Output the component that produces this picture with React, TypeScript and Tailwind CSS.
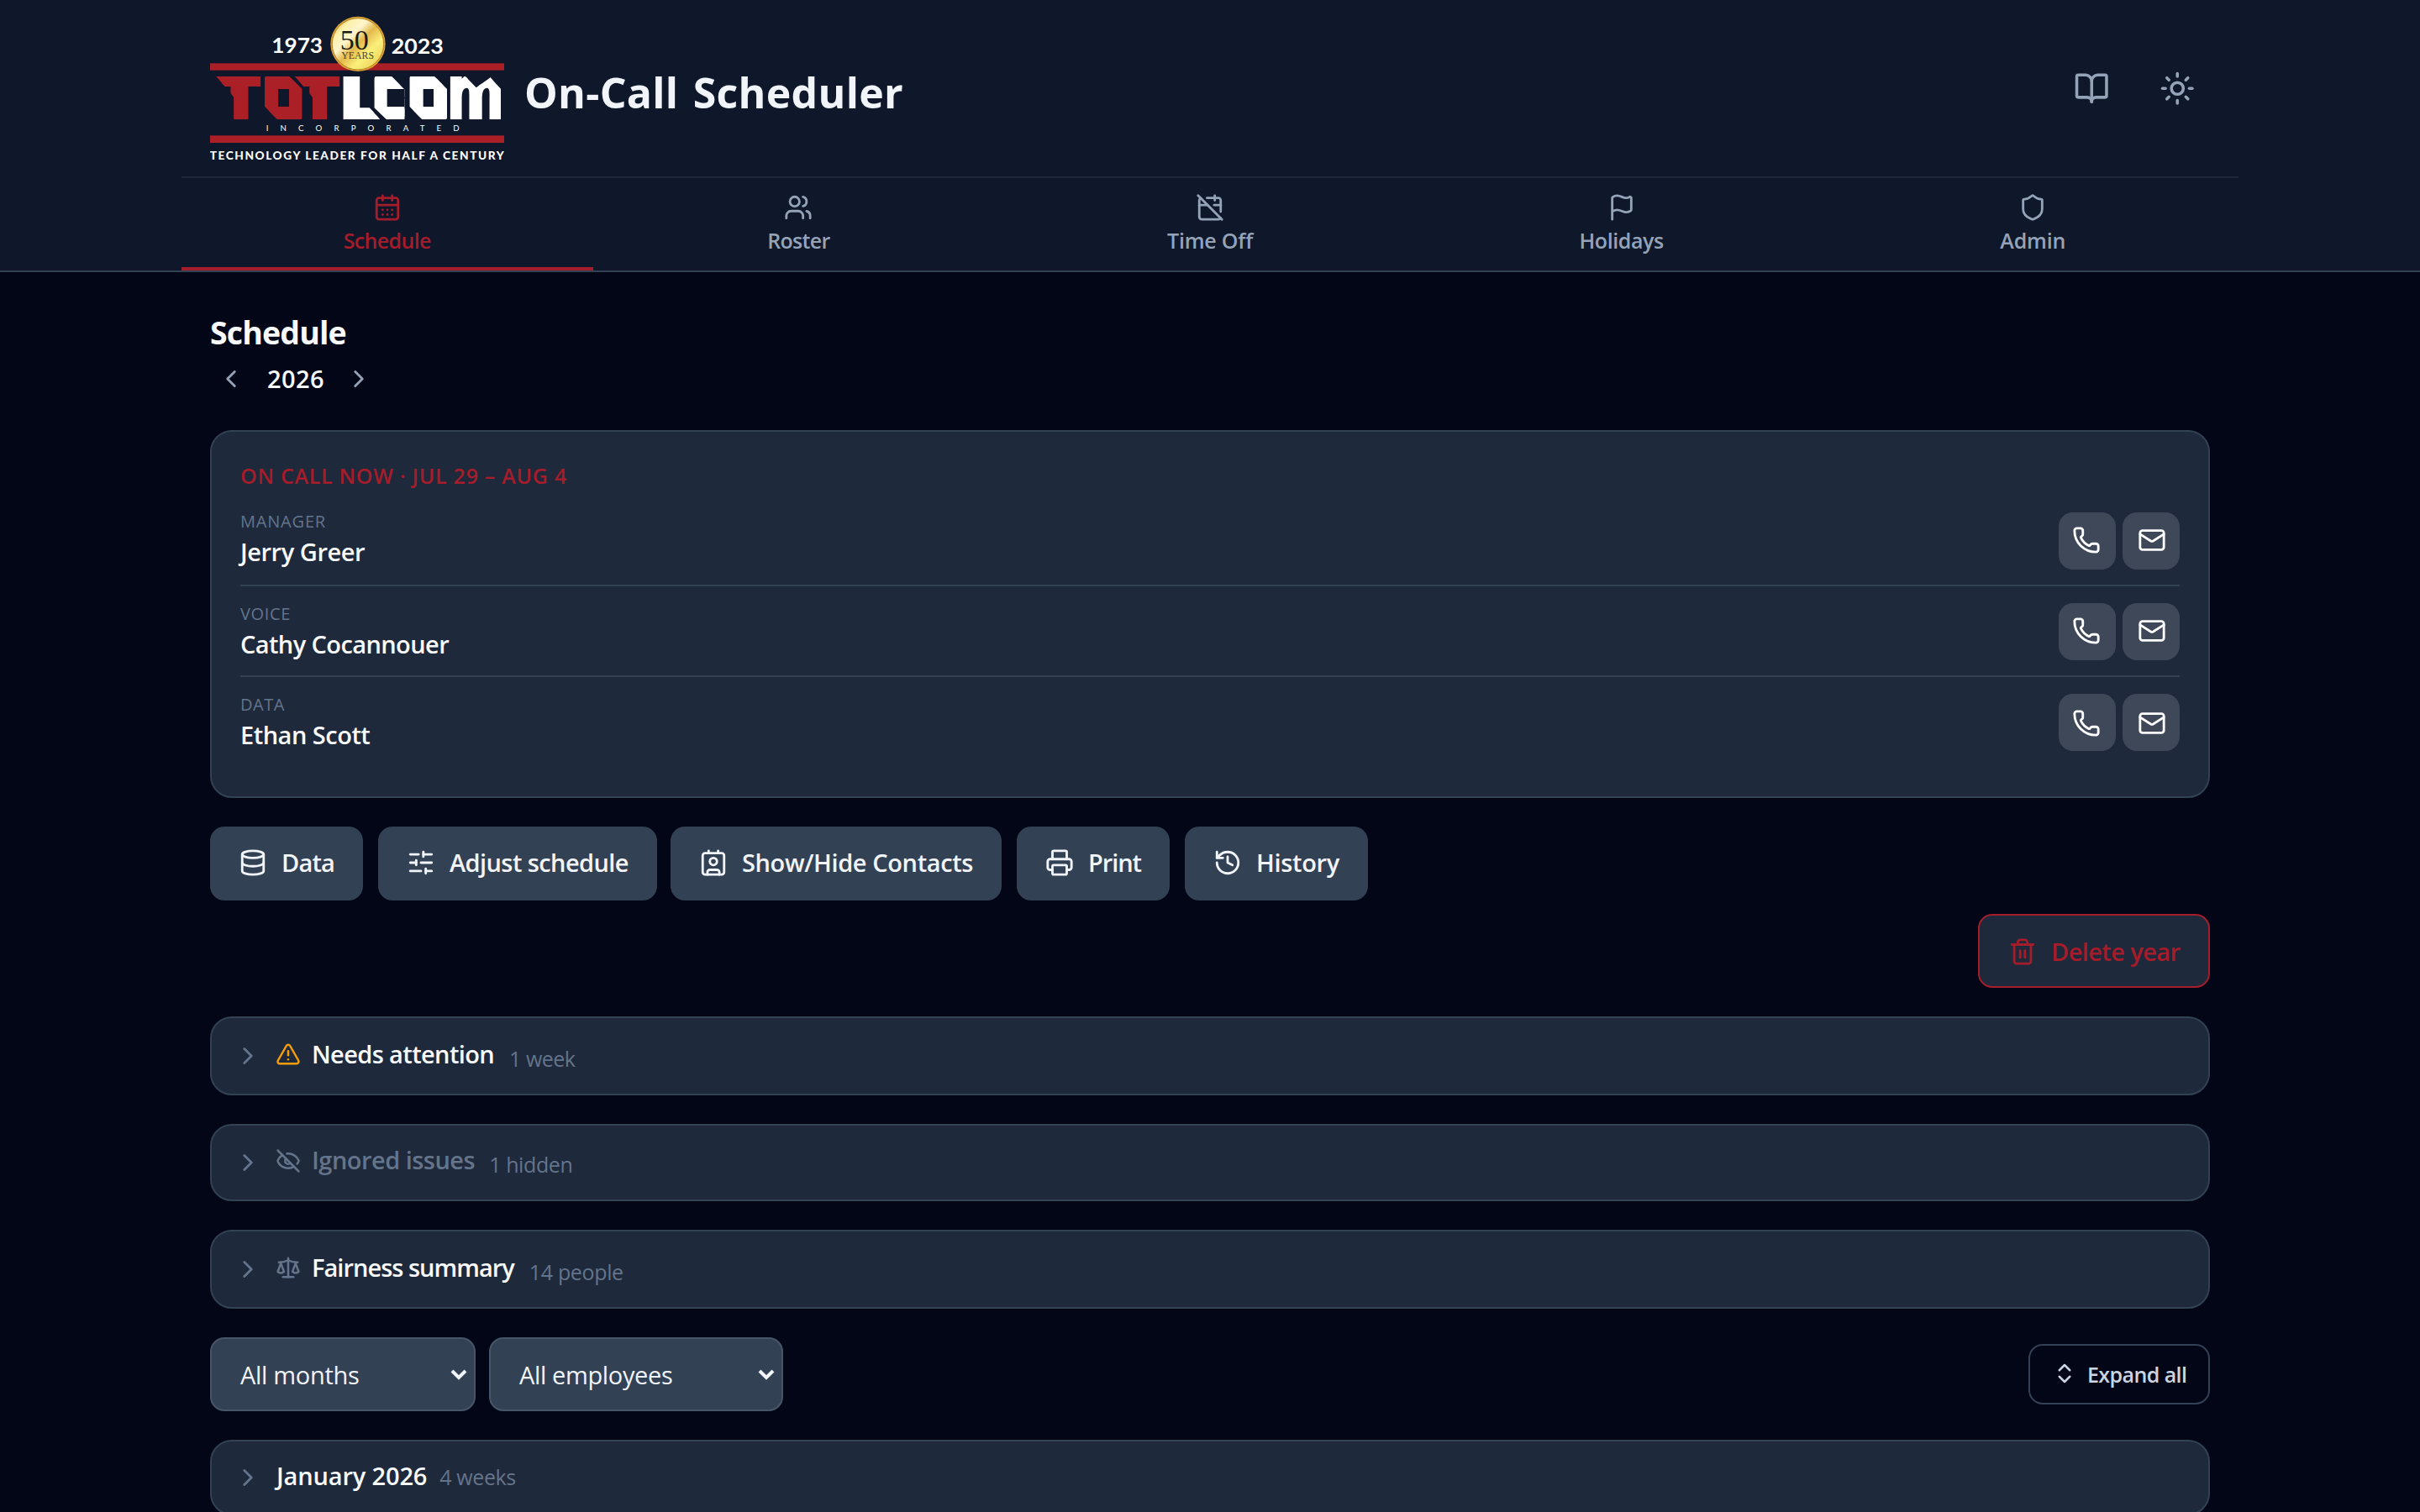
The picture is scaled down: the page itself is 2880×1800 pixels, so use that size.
import React from "react";
import {
  BookOpen,
  CalendarDays,
  CalendarOff,
  ChevronLeft,
  ChevronRight,
  ChevronsUpDown,
  Contact,
  Database,
  EyeOff,
  Flag,
  History,
  Mail,
  Phone,
  Printer,
  Scale,
  Shield,
  SlidersHorizontal,
  Sun,
  Trash2,
  TriangleAlert,
  Users,
  type LucideIcon,
} from "lucide-react";

type Letter = {
  ch: string;
  x: number;
  w: number;
  fill: string;
  clip: string;
  size?: number;
  stroke?: number;
  hole?: [number, number];
};

const RED = "#ab1f27";
const NAVY = "#0f172a";

/* Wordmark letters: each one is set in its own box, trimmed by a chamfered frame,
   and the round ones get a square counter. */
const LETTERS: Letter[] = [
  { ch: "T", x: 142, w: 166, fill: RED, clip: "142,273 301,273 301,427 205,427 205,347" },
  { ch: "O", x: 315, w: 134, fill: RED, clip: "315,273 403,273 449,318 449,427 360,427 315,380", stroke: 60, hole: [363, 39] },
  { ch: "T", x: 423, w: 166, fill: RED, clip: "423,273 583,273 583,427 486,427 486,347" },
  { ch: "L", x: 582, w: 142, fill: "#fff", clip: "595,273 686,273 686,381 727,427 595,427", stroke: 18 },
  { ch: "C", x: 706, w: 120, fill: "#fff", clip: "706,273 768,273 815,320 815,427 750,427 706,385", stroke: 60, hole: [752, 64] },
  { ch: "O", x: 832, w: 134, fill: "#fff", clip: "832,273 921,273 966,318 966,427 877,427 832,380", stroke: 60, hole: [881, 37] },
  { ch: "m", x: 965, w: 206, fill: "#fff", clip: "977,273 1032,273 1070,313 1121,277 1158,318 1158,427 977,427", size: 268 },
];

function Logo() {
  return (
    <svg viewBox="120 54 1050 522" className="mt-[18px] h-[174px] w-[350px] shrink-0">
      <defs>
        <linearGradient id="gold" x1="0" y1="0" x2="1" y2="1">
          <stop offset="0" stopColor="#d9a02c" />
          <stop offset="0.2" stopColor="#fbf0a8" />
          <stop offset="0.36" stopColor="#fff6cf" />
          <stop offset="0.5" stopColor="#e3b94a" />
          <stop offset="0.68" stopColor="#fbf07c" />
          <stop offset="0.85" stopColor="#f0d860" />
          <stop offset="1" stopColor="#c98b1c" />
        </linearGradient>
        {LETTERS.map((l, i) => (
          <clipPath key={i} id={`frame-${i}`}>
            <polygon points={l.clip} />
          </clipPath>
        ))}
      </defs>
      <rect x="120" y="226" width="1050" height="25" fill={RED} />
      <rect x="120" y="484" width="1050" height="26" fill={RED} />
      <circle cx="648" cy="157" r="98" fill="#dca436" />
      <circle cx="648" cy="157" r="92" fill="url(#gold)" stroke="#a8741c" strokeWidth="2.5" />
      <g fontFamily="Liberation Serif, serif" fill="#1c1a10">
        <text x="584" y="178" fontSize="104" textLength="102" lengthAdjust="spacingAndGlyphs">50</text>
        <text x="589" y="210" fontSize="39" textLength="116" lengthAdjust="spacingAndGlyphs" fill="#4d4420">YEARS</text>
      </g>
      <g fontFamily="Lato, sans-serif" fontWeight="700" fill="#fff">
        <text x="340" y="188" fontSize="76" textLength="182" lengthAdjust="spacingAndGlyphs">1973</text>
        <text x="767" y="191" fontSize="76" textLength="186" lengthAdjust="spacingAndGlyphs">2023</text>
        <text x="320" y="467" fontSize="29" textLength="690" fontWeight="400">INCORPORATED</text>
        <text x="119" y="570" fontSize="41" fontWeight="900" textLength="1050" lengthAdjust="spacing">
          TECHNOLOGY LEADER FOR HALF A CENTURY
        </text>
      </g>
      {LETTERS.map((l, i) => (
        <g key={i} clipPath={`url(#frame-${i})`}>
          <text
            x={l.x - 4}
            y="424"
            fontSize={l.size ?? 203}
            fontFamily="DejaVu Sans, sans-serif"
            fontWeight="700"
            textLength={l.w + 8}
            lengthAdjust="spacingAndGlyphs"
            fill={l.fill}
            stroke={l.fill}
            strokeWidth={l.stroke ?? 12}
          >
            {l.ch}
          </text>
          {l.hole && <rect x={l.hole[0]} y="318" width={l.hole[1]} height="63" fill={NAVY} />}
        </g>
      ))}
    </svg>
  );
}

const TABS: { label: string; icon: LucideIcon; text: string; active?: boolean }[] = [
  { label: "Schedule", icon: CalendarDays, text: "tracking-[-0.65px]", active: true },
  { label: "Roster", icon: Users, text: "tracking-[-0.7px]" },
  { label: "Time Off", icon: CalendarOff, text: "tracking-[-0.2px]" },
  { label: "Holidays", icon: Flag, text: "tracking-[-0.4px]" },
  { label: "Admin", icon: Shield, text: "tracking-[-0.2px]" },
];

function Header() {
  return (
    <header className="border-b-2 border-[#334155] bg-[#0f172a]">
      <div className="mx-auto w-[2448px]">
        <div className="flex h-[210px] items-start px-[34px]">
          <Logo />
          <h1 className="ml-[24px] mt-[75px] whitespace-nowrap text-[50px] font-bold leading-[70px] tracking-[0.3px] text-[#f1f5f9] [word-spacing:4px]">
            On-Call Scheduler
          </h1>
          <div className="ml-auto mt-[67px] flex gap-[25px] text-[#94a3b8]">
            <button className="flex h-[77px] w-[77px] items-center justify-center rounded-2xl">
              <BookOpen size={42.5} />
            </button>
            <button className="flex h-[77px] w-[77px] items-center justify-center rounded-2xl">
              <Sun size={42.5} />
            </button>
          </div>
        </div>
        <nav className="grid grid-cols-5 border-t-2 border-[#1e293b]">
          {TABS.map(({ label, icon: Icon, text, active }) => (
            <a
              key={label}
              className={`flex h-[110px] flex-col items-center border-b-4 pt-[18px] ${
                active ? "border-[#a51c2a] text-[#a51c2a]" : "border-transparent text-[#94a3b8]"
              }`}
            >
              <Icon size={34} />
              <span className={`mt-[5px] text-[25px] font-semibold leading-[34px] ${text}`}>{label}</span>
            </a>
          ))}
        </nav>
      </div>
    </header>
  );
}

const ON_CALL = [
  { role: "MANAGER", name: "Jerry Greer", row: "h-[108px] border-b-2 pt-[16px]", actions: "mt-[4px]", roleText: "tracking-[0.81px]", nameText: "tracking-[-0.45px]", icon: "mb-[2px]" },
  { role: "VOICE", name: "Cathy Cocannouer", row: "h-[108px] border-b-2 pt-[18px]", actions: "mt-[2px]", roleText: "tracking-[0.64px]", nameText: "tracking-[-0.6px]", icon: "mb-[2px]" },
  { role: "DATA", name: "Ethan Scott", row: "h-[108px] pt-[18px]", actions: "mt-[2px]", roleText: "tracking-[0.54px]", nameText: "tracking-[-0.5px]", icon: "mt-[2px]" },
];

function OnCallCard() {
  return (
    <section className="mt-[30px] h-[438px] rounded-[26px] border-2 border-[#334155] bg-[#1e293b] px-[34px] pt-[34px]">
      <h3 className="mb-[6px] text-[25px] font-semibold leading-[36px] tracking-[0.72px] text-[#a51c2a]">
        ON CALL NOW · JUL 29 – AUG 4
      </h3>
      {ON_CALL.map((p) => (
        <div key={p.role} className={`flex justify-between border-[#334155] ${p.row}`}>
          <div>
            <div className={`text-[20px] font-medium leading-[30px] text-[#64748b] ${p.roleText}`}>{p.role}</div>
            <div className={`mt-[3px] text-[29px] font-semibold leading-[36px] text-[#f8fafc] ${p.nameText}`}>{p.name}</div>
          </div>
          <div className={`flex gap-2 ${p.actions}`}>
            <button className="flex h-[68px] w-[68px] items-center justify-center rounded-[17px] bg-white/15 text-white">
              <Phone size={34} className={`mr-[2px] ${p.icon}`} />
            </button>
            <button className="flex h-[68px] w-[68px] items-center justify-center rounded-[17px] bg-white/15 text-white">
              <Mail size={34} className={`ml-[2px] ${p.icon}`} />
            </button>
          </div>
        </div>
      ))}
    </section>
  );
}

const ACTIONS: { label: string; icon: LucideIcon; box: string }[] = [
  { label: "Data", icon: Database, box: "w-[182px] tracking-[-0.84px]" },
  { label: "Adjust schedule", icon: SlidersHorizontal, box: "-mr-[2px] w-[332px] tracking-[-0.59px]" },
  { label: "Show/Hide Contacts", icon: Contact, box: "w-[394px] tracking-[-0.39px]" },
  { label: "Print", icon: Printer, box: "w-[182px] tracking-[-1.07px]" },
  { label: "History", icon: History, box: "w-[218px] tracking-[-0.31px]" },
];

function Actions() {
  return (
    <>
      <div className="mt-[34px] flex gap-x-[18px]">
        {ACTIONS.map(({ label, icon: Icon, box }) => (
          <button
            key={label}
            className={`flex h-[88px] items-center gap-[17px] whitespace-nowrap rounded-[17px] bg-[#334155] pl-[34px] text-[29px] font-semibold text-[#f1f5f9] ${box}`}
          >
            <Icon size={34} className="mb-[2px] shrink-0" />
            <span className="mb-[2px]">{label}</span>
          </button>
        ))}
      </div>
      <div className="mt-4 flex justify-end">
        <button className="flex h-[88px] w-[276px] items-center gap-[17px] whitespace-nowrap rounded-[17px] border-2 border-[#a51c2a] bg-[#1e293b] pl-[34px] text-[29px] font-semibold tracking-[-0.6px] text-[#a51c2a]">
          <Trash2 size={34} className="mt-[2px] shrink-0" />
          <span className="mt-[2px]">Delete year</span>
        </button>
      </div>
    </>
  );
}

type PanelProps = {
  title: string;
  note: string;
  box?: string;
  titleText: string;
  noteText: string;
  children?: React.ReactNode;
};

function Panel({ title, note, box = "h-[94px]", titleText, noteText, children }: PanelProps) {
  return (
    <section className={`mt-[34px] flex items-center rounded-[26px] border-2 border-[#334155] bg-[#1e293b] pl-[26px] ${box}`}>
      <ChevronRight size={34} className="mb-px text-[#64748b]" />
      {children}
      <h3 className={`whitespace-nowrap text-[29px] font-semibold leading-[40px] ${titleText}`}>{title}</h3>
      <span className={`whitespace-nowrap text-[25px] leading-[34px] text-[#64748b] ${noteText}`}>{note}</span>
    </section>
  );
}

function SelectBox({ label, box }: { label: string; box: string }) {
  return (
    <div className={`flex h-[88px] items-center justify-between rounded-[17px] border-2 border-[#475569] bg-[#334155] pl-[34px] pr-[8px] text-[29px] text-[#f1f5f9] ${box}`}>
      <span className="mt-[2px]">{label}</span>
      <svg viewBox="0 0 20 13" className="h-[13px] w-[20px]" fill="none" stroke="currentColor" strokeWidth="4">
        <path d="M2 2l8 8 8-8" />
      </svg>
    </div>
  );
}

export default function App() {
  return (
    <div className="h-[1800px] overflow-hidden bg-[#020617] font-['Open_Sans',sans-serif]">
      <Header />
      <main className="mx-auto w-[2380px]">
        <h2 className="pt-[46px] text-[37.5px] font-bold leading-[51px] tracking-[-0.85px] text-[#f8fafc]">Schedule</h2>
        <div className="flex h-[61px] items-center pl-2 text-[#94a3b8]">
          <ChevronLeft size={34} className="mb-[2px]" />
          <span className="ml-[26px] mr-[24px] mb-[2px] text-[29px] font-semibold tracking-[0.42px] text-[#f8fafc]">2026</span>
          <ChevronRight size={34} className="mb-[2px]" />
        </div>
        <OnCallCard />
        <Actions />
        <Panel title="Needs attention" note="1 week" titleText="mb-[4px] ml-[13px] tracking-[-0.62px] text-[#f8fafc]" noteText="mt-[6px] ml-[18px] tracking-[-0.5px]">
          <TriangleAlert size={30} className="mb-[4px] ml-4 text-[#f59e0b]" />
        </Panel>
        <Panel title="Ignored issues" note="1 hidden" box="h-[92px]" titleText="mb-[6px] ml-[13px] tracking-[-0.52px] text-[#64748b]" noteText="mt-[4px] ml-[17px] tracking-[-0.4px]">
          <EyeOff size={30} className="mb-[4px] ml-4 text-[#64748b]" />
        </Panel>
        <Panel title="Fairness summary" note="14 people" titleText="mb-[4px] ml-[13px] tracking-[-0.98px] text-[#f8fafc]" noteText="mt-[6px] ml-[18px] tracking-[-0.35px]">
          <Scale size={30} className="mb-[4px] ml-4 text-[#64748b]" />
        </Panel>
        <div className="mt-[34px] flex items-center">
          <SelectBox label="All months" box="w-[316px] tracking-[-0.3px]" />
          <SelectBox label="All employees" box="ml-4 w-[350px] tracking-[-0.36px]" />
          <button className="ml-auto flex h-[72px] w-[216px] items-center whitespace-nowrap rounded-[17px] border-2 border-[#334155] pl-[26px] text-[25px] font-semibold tracking-[-0.58px] text-[#cbd5e1]">
            <ChevronsUpDown size={30} className="mb-[2px] mr-[12px]" />
            <span className="mt-[2px]">Expand all</span>
          </button>
        </div>
        <Panel title="January 2026" note="4 weeks" box="h-[90px]" titleText="mb-[4px] ml-[17px] tracking-[-0.15px] text-[#f8fafc]" noteText="mb-[2px] ml-[15px] tracking-[-0.38px]" />
      </main>
    </div>
  );
}
